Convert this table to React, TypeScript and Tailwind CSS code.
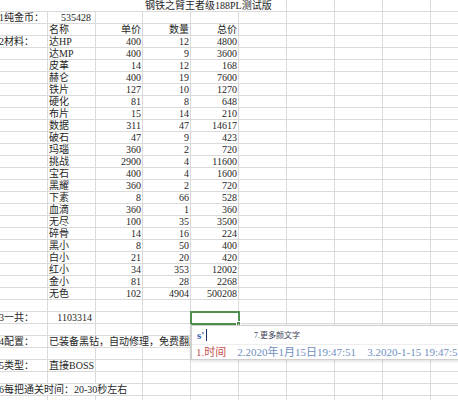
import clsx from "clsx";
import type { ReactNode } from "react";

const COLS = [
  "w-[48px]",
  "w-[48px]",
  "w-[47px]",
  "w-[48px]",
  "w-[48px]",
  "w-[48px]",
  "w-[48px]",
  "w-[48px]",
  "w-[48px]",
  "w-[40px]",
];

const materials: [string, number, number, number][] = [
  ["达HP", 400, 12, 4800],
  ["达MP", 400, 9, 3600],
  ["皮革", 14, 12, 168],
  ["赫仑", 400, 19, 7600],
  ["铁片", 127, 10, 1270],
  ["硬化", 81, 8, 648],
  ["布片", 15, 14, 210],
  ["数据", 311, 47, 14617],
  ["破石", 47, 9, 423],
  ["玛瑙", 360, 2, 720],
  ["挑战", 2900, 4, 11600],
  ["宝石", 400, 4, 1600],
  ["黑耀", 360, 2, 720],
  ["下素", 8, 66, 528],
  ["血滴", 360, 1, 360],
  ["无尽", 100, 35, 3500],
  ["碎骨", 14, 16, 224],
  ["黑小", 8, 50, 400],
  ["白小", 21, 20, 420],
  ["红小", 34, 353, 12002],
  ["金小", 81, 28, 2268],
  ["无色", 102, 4904, 500208],
];

function Cell({
  w,
  right,
  className,
  children,
}: {
  w: string;
  right?: boolean;
  className?: string;
  children?: ReactNode;
}) {
  return (
    <div
      className={clsx(
        "relative h-full shrink-0 flex items-center border-r border-[#dadada] whitespace-nowrap",
        w,
        right ? "justify-end pr-[1px]" : "pl-[1px]",
        className
      )}
    >
      {children}
    </div>
  );
}

const Blank = ({ from }: { from: number }) => (
  <>
    {COLS.slice(from).map((w, i) => (
      <Cell key={i} w={w} />
    ))}
  </>
);

const Row = ({ children }: { children?: ReactNode }) => (
  <div className="flex h-[12px] border-b border-[#dadada]">{children}</div>
);

// column A starts just left of the window, so its labels are clipped
const Label = ({ children }: { children: ReactNode }) => (
  <span className="-ml-[2px]">{children}</span>
);

export default function App() {
  return (
    <div className="relative w-[458px] h-[400px] overflow-hidden bg-white text-[10px] leading-[11px] text-[#262626] font-['Liberation_Serif','Noto_Sans_CJK_SC',serif]">
      {/* title, overflowing into F */}
      <Row>
        <Cell w="w-[287px]">
          <span className="pl-[144px]">钢铁之臂王者级188PL测试版</span>
        </Cell>
        <Blank from={6} />
      </Row>

      <Row>
        <Cell w={COLS[0]}>
          <Label>1纯金币：</Label>
        </Cell>
        <Cell w={COLS[1]} right className="pr-[4px]">
          535428
        </Cell>
        <Blank from={2} />
      </Row>

      <Row>
        <Cell w={COLS[0]} />
        <Cell w={COLS[1]}>名称</Cell>
        <Cell w={COLS[2]} right>单价</Cell>
        <Cell w={COLS[3]} right>数量</Cell>
        <Cell w={COLS[4]} right>总价</Cell>
        <Blank from={5} />
      </Row>

      {materials.map(([name, price, qty, total], i) => (
        <Row key={name}>
          <Cell w={COLS[0]}>{i === 0 && <Label>2材料：</Label>}</Cell>
          <Cell w={COLS[1]}>{name}</Cell>
          <Cell w={COLS[2]} right>{price}</Cell>
          <Cell w={COLS[3]} right>{qty}</Cell>
          <Cell w={COLS[4]} right>{total}</Cell>
          <Blank from={5} />
        </Row>
      ))}

      <Row>
        <Blank from={0} />
      </Row>

      <Row>
        <Cell w={COLS[0]}>
          <Label>3一共：</Label>
        </Cell>
        <Cell w={COLS[1]} right className="pr-[3px]">
          1103314
        </Cell>
        <Cell w={COLS[2]} />
        <Cell w={COLS[3]} />
        <Cell w={COLS[4]}>
          {/* selected cell */}
          <div className="absolute -left-[1px] -top-[1px] w-[50px] h-[14px] border-2 border-[#4f8f4f]" />
          <div className="absolute -right-[3px] -bottom-[3px] w-[5px] h-[5px] bg-[#4f8f4f] border border-white" />
        </Cell>
        <Blank from={5} />
      </Row>

      <Row>
        <Blank from={0} />
      </Row>

      <Row>
        <Cell w={COLS[0]}>
          <Label>4配置：</Label>
        </Cell>
        <Cell w="w-[143px]" className="overflow-hidden">
          已装备黑钻，自动修理，免费翻牌
        </Cell>
        <Blank from={5} />
      </Row>

      <Row>
        <Blank from={0} />
      </Row>

      <Row>
        <Cell w={COLS[0]}>
          <Label>5类型：</Label>
        </Cell>
        <Cell w={COLS[1]}>直接BOSS</Cell>
        <Blank from={2} />
      </Row>

      <Row>
        <Blank from={0} />
      </Row>

      <Row>
        <Cell w="w-[143px]">
          <Label>6每把通关时间：20-30秒左右</Label>
        </Cell>
        <Blank from={3} />
      </Row>

      <Row>
        <Blank from={0} />
      </Row>

      {/* IME candidate window */}
      <div className="absolute left-[191px] top-[325px] w-[290px] h-[35px] z-10 bg-white border border-[#cfcfcf] shadow-[0_1px_3px_rgba(0,0,0,0.15)]">
        <div className="flex items-center h-[18px] pl-[5px]">
          <div className="w-[57px] flex items-center">
            <span className="text-[11px] font-bold text-[#2f5ea8]">s'</span>
            <span className="ml-[2px] w-[1px] h-[12px] bg-[#1c2f6b]" />
          </div>
          <span className="text-[8px] text-[#3a3f55]">7.更多颜文字</span>
        </div>
        <div className="flex items-center h-[16px] pl-[4px] gap-[11px] border-t border-[#eeeeee] text-[11px]">
          <span className="text-[#c45454]">1.时间</span>
          <span className="text-[#6f8fbf]">2.2020年1月15日19:47:51</span>
          <span className="text-[#6f8fbf]">3.2020-1-15 19:47:51</span>
        </div>
      </div>
    </div>
  );
}
